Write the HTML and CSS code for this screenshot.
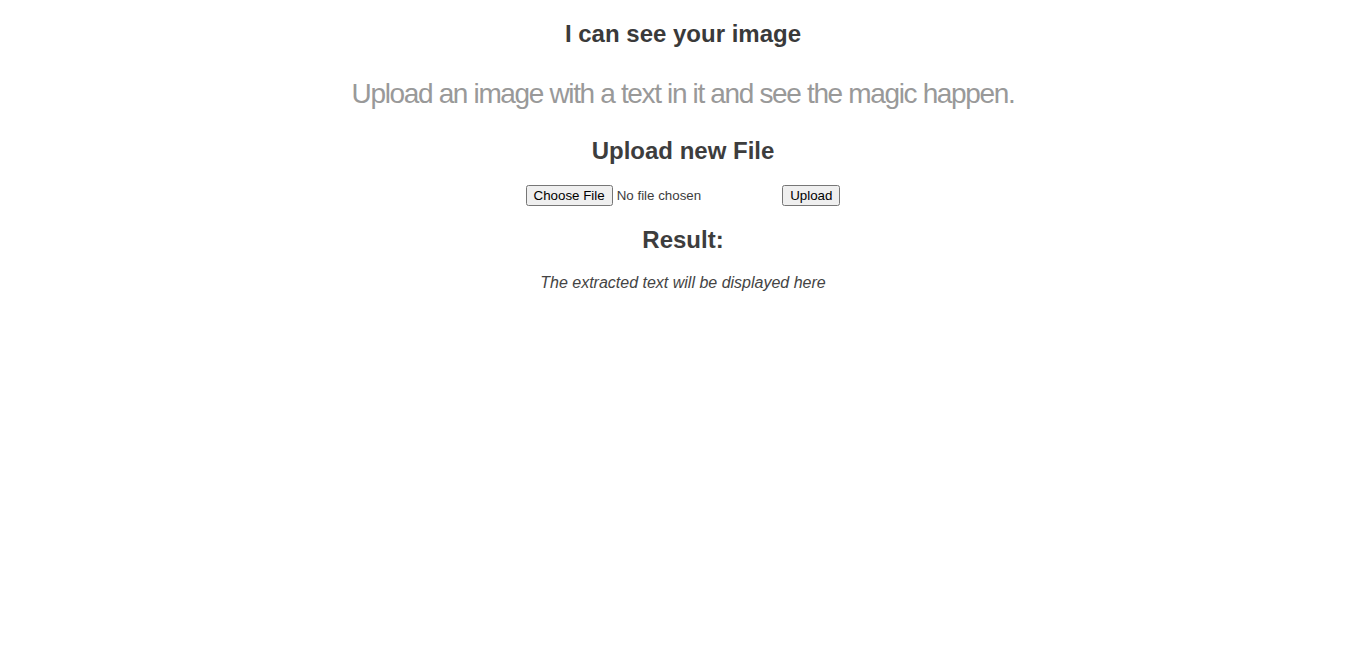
FILE: index.html
```html
<!DOCTYPE html>
<html>
<head>
<meta charset="utf-8">
<link rel="stylesheet" href="styles.css">
</head>
<body>
<div class="page">
  <h1 class="title">I can see your image</h1>
  <p class="lead">Upload an image with a text in it and see the magic happen.</p>
  <h2 class="section">Upload new File</h2>
  <form class="upload">
    <input type="file" name="file">
    <input type="submit" value="Upload">
  </form>
  <h2 class="section">Result:</h2>
  <p class="result">The extracted text will be displayed here</p>
</div>
</body>
</html>
```
FILE: styles.css
```css
body {
  margin: 0;
  font-family: "Liberation Sans", Arial, sans-serif;
  color: #3d3d3d;
  background: #fff;
}
.page {
  text-align: center;
  padding-top: 20px;
}
.title {
  font-size: 24px;
  font-weight: bold;
  margin: 0 0 30px;
  color: #3a3a3a;
}
.lead {
  font-size: 28px;
  color: #999;
  letter-spacing: -1.35px;
  margin: 0 0 27px;
}
.section {
  font-size: 24px;
  font-weight: bold;
  margin: 0 0 20px;
  color: #3d3d3d;
}
.upload {
  margin: 0 0 20px;
  font-size: 13px;
}
.result {
  font-style: italic;
  font-size: 16px;
  color: #444;
  margin: 18px 0 0;
}
```
